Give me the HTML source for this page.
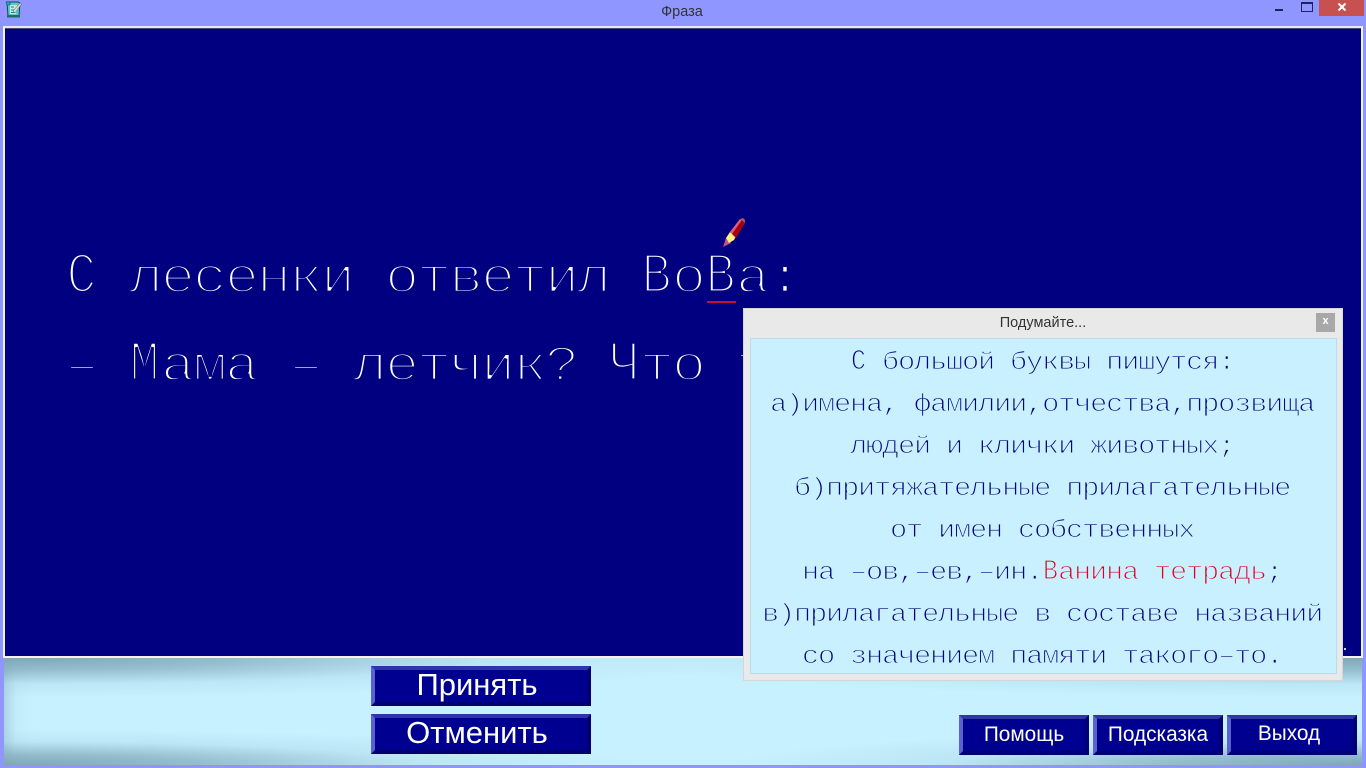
<!DOCTYPE html>
<html lang="ru">
<head>
<meta charset="utf-8">
<title>Фраза</title>
<style>
html,body{margin:0;padding:0;width:1366px;height:768px;overflow:hidden;background:#8f96ff;font-family:"Liberation Sans",sans-serif}
.abs{position:absolute}
#main{left:3px;top:26px;width:1360px;height:632px;box-sizing:border-box;background:#000080;border:2px solid #f2f2f2;border-top-color:#e8e8f0}
#main:before{content:"";position:absolute;left:0;top:0;right:0;height:1px;background:#4a4a70}
#bottom{left:4px;top:658px;width:1358px;height:107px;background:
radial-gradient(ellipse 760px 40px at 0 0,#7ea8b8 0,rgba(126,168,184,.7) 30%,rgba(160,205,222,.3) 65%,rgba(200,240,255,0) 100%),
radial-gradient(ellipse 760px 40px at 100% 0,#7ea8b8 0,rgba(126,168,184,.7) 30%,rgba(160,205,222,.3) 65%,rgba(200,240,255,0) 100%),
radial-gradient(ellipse 640px 36px at 0 100%,#7ea8b8 0,rgba(126,168,184,.7) 30%,rgba(160,205,222,.3) 65%,rgba(200,240,255,0) 100%),
radial-gradient(ellipse 640px 36px at 100% 100%,#7ea8b8 0,rgba(126,168,184,.7) 30%,rgba(160,205,222,.3) 65%,rgba(200,240,255,0) 100%),
linear-gradient(90deg,rgba(126,168,184,.4) 0,rgba(170,215,232,.18) 12px,rgba(200,240,255,0) 30px),
#c8f1ff}
.btn{box-sizing:border-box;background:#000090;color:#fff;text-align:center;border-style:solid;border-width:4px;border-color:#2f35a8 #000070 #000070 #5a62d0;white-space:nowrap}
.big{left:371px;width:220px;height:40px;font-size:31px;line-height:30px;padding-right:8px}
.small{top:715px;width:130px;height:40px;font-size:20.8px;line-height:32px}
#title{left:0;width:1366px;top:3px;text-align:center;font-size:14.5px;line-height:18px;color:#333;padding-right:2px;box-sizing:border-box}
#dlg{left:743px;top:308px;width:600px;height:373px;background:#e9e9e9;box-sizing:border-box;border:1px solid #d6d6d6}
#dlgT{left:-1px;width:600px;top:6px;text-align:center;font-size:14.5px;line-height:17px;color:#333}
#dlgIn{left:6px;top:29px;width:587px;height:336px;background:#c8f0ff;border:1px solid #bcdbe8;box-sizing:border-box}
#dlgX{left:572px;top:4px;width:19px;height:19px;background:#a8a8a8;color:#fff;font-size:11px;font-weight:bold;line-height:17px;text-align:center}
svg.full{position:absolute;left:0;top:0}
text{white-space:pre;font-family:"Liberation Mono",monospace;text-rendering:geometricPrecision}
.tb{font-size:50px;letter-spacing:-2.17px;fill:#fff;stroke:#000080;stroke-width:2.8px}
.td{font-size:25px;letter-spacing:-1.085px;fill:#000078;stroke:#c8f0ff;stroke-width:1.05px}
.rd{fill:#e0001c}
</style>
</head>
<body>
<div class="abs" id="title">Фраза</div>

<svg class="abs" style="left:5px;top:1px" width="18" height="18" viewBox="0 0 18 18">
<path d="M2 1h11l2 1-1 13H3z" fill="#58c8c8" stroke="#104848"/>
<path d="M5 4h7l-1 9H5z" fill="#bfe8e8"/>
<path d="M1 1h4v3H2z" fill="#20b0c0" stroke="#104848" stroke-width=".6"/>
<path d="M2 14h13v2.5H2z" fill="#1c6c70"/>
<path d="M8 10l7-8 1.5 1-6.500 9z" fill="#d8d8d8" stroke="#606060" stroke-width=".5"/>
<path d="M6 6h3M6 9h3M6 11.500h4" stroke="#308080"/>
</svg>

<div class="abs" style="left:1275px;top:9px;width:8px;height:2px;background:#1c2458"></div>
<div class="abs" style="left:1301px;top:2px;width:10px;height:7px;border:1px solid #1c2458;border-top-width:2px"></div>
<div class="abs" style="left:1319px;top:0;width:45px;height:16px;background:#c75050"></div>
<svg class="abs" style="left:1337px;top:2px" width="10" height="10" viewBox="0 0 10 10"><path d="M1.500 1.500l7 7M8.500 1.500l-7 7" stroke="#fff" stroke-width="2"/></svg>

<div class="abs" id="main"></div>
<div class="abs" id="bottom"></div>

<svg class="full" width="1366" height="768" viewBox="0 0 1366 768">
<text class="tb" transform="translate(66.500,292) scale(1,1.15)">С</text>
<text class="tb" transform="translate(128.750,292) scale(1.15,1)">лесенки ответил</text>
<text class="tb" transform="translate(641.500,292) scale(1,1.15)">В</text>
<text class="tb" transform="translate(671.750,292) scale(1.15,1)">о</text>
<text class="tb" transform="translate(705.500,292) scale(1,1.15)">В</text>
<text class="tb" transform="translate(735.750,292) scale(1.15,1)">а:</text>
<text class="tb" transform="translate(64.750,380) scale(1.15,1)">–</text>
<text class="tb" transform="translate(129.500,380) scale(1,1.15)">М</text>
<text class="tb" transform="translate(160.750,380) scale(1.15,1)">ама – летчик?</text>
<text class="tb" transform="translate(609.500,380) scale(1,1.15)">Ч</text>
<text class="tb" transform="translate(639.750,380) scale(1.15,1)">то т</text>
<rect x="707" y="301" width="29" height="2" fill="#c8102e"/>
<path d="M723 247L726 238L731 243Z" fill="#c8508a"/>
<path d="M726 238L730 232L736 236L734 240L729 243Z" fill="#fff080"/>
<path d="M730 232L740 219L745 223L736 238Z" fill="#a80010"/>
<path d="M730 232L740 219L741.500 220.500L732 234Z" fill="#d8607a"/>
<path d="M740 219L743 218L745 220L745 223Z" fill="#a06050"/>
<rect x="1344" y="648" width="2" height="2" fill="#c8d0ff"/>
</svg>

<div class="abs btn big" style="top:666px">Принять</div>
<div class="abs btn big" style="top:714px">Отменить</div>
<div class="abs btn small" style="left:959px">Помощь</div>
<div class="abs btn small" style="left:1093px">Подсказка</div>
<div class="abs btn small" style="left:1227px;line-height:30px;padding-right:6px">Выход</div>

<div class="abs" id="dlg">
<div class="abs" id="dlgT">Подумайте...</div>
<div class="abs" id="dlgX">x</div>
<div class="abs" id="dlgIn"></div>
</div>

<svg class="full" width="1366" height="768" viewBox="0 0 1366 768">
<text class="td" transform="translate(851,369) scale(1,1.15)">С</text>
<text class="td" transform="translate(882,369) scale(1.15,1)">большой буквы пишутся:</text>
<text class="td" transform="translate(770,411) scale(1.15,1)">а)имена, фамилии,отчества,прозвища</text>
<text class="td" transform="translate(850,453) scale(1.15,1)">людей и клички животных;</text>
<text class="td" transform="translate(794,495) scale(1.15,1)">б)притяжательные прилагательные</text>
<text class="td" transform="translate(890,537) scale(1.15,1)">от имен собственных</text>
<text class="td" transform="translate(802,579) scale(1.15,1)">на –ов,–ев,–ин.</text>
<text class="td rd" transform="translate(1043,579) scale(1,1.15)">В</text>
<text class="td rd" transform="translate(1058,579) scale(1.15,1)">анина тетрадь</text>
<text class="td" transform="translate(1266,579) scale(1.15,1)">;</text>
<text class="td" transform="translate(762,621) scale(1.15,1)">в)прилагательные в составе названий</text>
<text class="td" transform="translate(802,663) scale(1.15,1)">со значением памяти такого–то.</text>
</svg>
</body>
</html>
